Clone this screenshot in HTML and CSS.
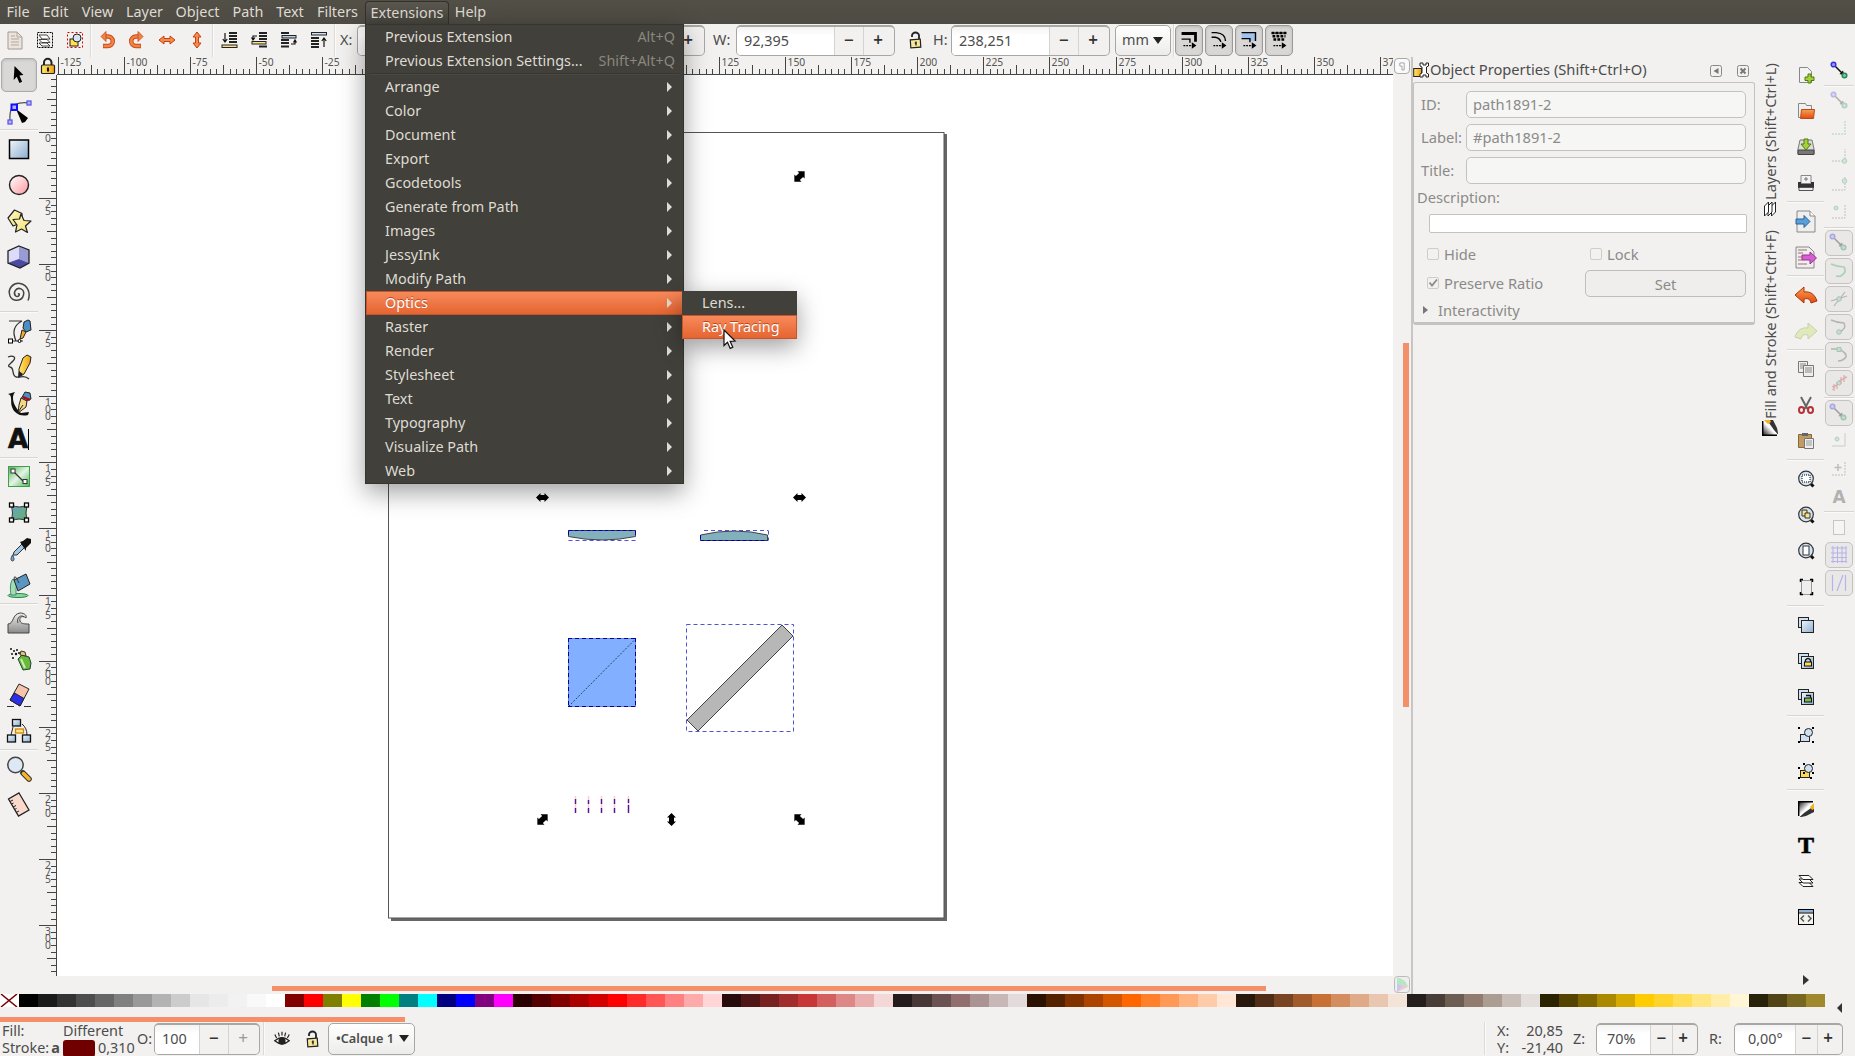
FILE: index.html
```html
<!DOCTYPE html>
<html lang="en">
<head>
<meta charset="utf-8">
<title>Inkscape</title>
<link rel="stylesheet" href="styles.css">
</head>
<body>
<svg class="defs" width="0" height="0">
  <defs>
    <linearGradient id="blue" x1="0" y1="0" x2="1" y2="1"><stop offset="0" stop-color="#f0f6fb"/><stop offset="1" stop-color="#8badcf"/></linearGradient>
    <linearGradient id="pink" x1="0" y1="0" x2="1" y2="1"><stop offset="0" stop-color="#fff"/><stop offset="1" stop-color="#ff98a0"/></linearGradient>
    <linearGradient id="yellow" x1="0" y1="0" x2="1" y2="1"><stop offset="0" stop-color="#fffde0"/><stop offset="1" stop-color="#f2dc55"/></linearGradient>
    <linearGradient id="green" x1="0" y1="0" x2="1" y2="1"><stop offset="0" stop-color="#4fb35c"/><stop offset=".5" stop-color="#e6f4e6"/><stop offset="1" stop-color="#4fb35c"/></linearGradient>
    <linearGradient id="mesh" x1="0" y1="0" x2="1" y2="1"><stop offset="0" stop-color="#6e9fc4"/><stop offset="1" stop-color="#5fb56a"/></linearGradient>
    <linearGradient id="orange" x1="0" y1="0" x2="0" y2="1"><stop offset="0" stop-color="#f8a24e"/><stop offset="1" stop-color="#e24a12"/></linearGradient>
    <linearGradient id="gold" x1="0" y1="0" x2="1" y2="0"><stop offset="0" stop-color="#ffe96b"/><stop offset="1" stop-color="#f0a010"/></linearGradient>
    <linearGradient id="ink" x1="0" y1="0" x2="1" y2="1"><stop offset="0" stop-color="#000"/><stop offset=".5" stop-color="#fff"/><stop offset="1" stop-color="#ddd"/></linearGradient>
    <linearGradient id="grey" x1="0" y1="0" x2="0" y2="1"><stop offset="0" stop-color="#eee"/><stop offset="1" stop-color="#8a8a8a"/></linearGradient>
    <symbol id="padlock" viewBox="0 0 14 18"><path d="M3 6V4.500a3.500 3 0 0 1 7 0V8" fill="none" stroke="#222" stroke-width="1.800"/><rect x="1.500" y="8.500" width="10" height="8" fill="#f7e69a" stroke="#222" stroke-width="1.200" transform="rotate(-4 7 12)"/><path d="M7 10.500v4M5.800 12h2" stroke="#222" stroke-width="1.300"/></symbol>
    <symbol id="snapnode" viewBox="0 0 24 24"><path d="M6.500 6.500L15 15" stroke="#111" stroke-width="1.500"/><path d="M16.500 16.500l-5-1.500 3.500-3.500z" fill="#111"/><circle cx="5.500" cy="5.500" r="2.300" fill="#99f" stroke="#33d" stroke-width="1.500"/><circle cx="16.500" cy="16.500" r="2.300" fill="#7c9" stroke="#285" stroke-width="1.500"/></symbol>
    <symbol id="twopage" viewBox="0 0 24 24"><rect x="4.500" y="4.500" width="10" height="10" fill="#cfe0f0" stroke="#222"/><rect x="7.500" y="7.500" width="12" height="12" fill="url(#blue)" stroke="#222"/></symbol>
    <symbol id="lens" viewBox="0 0 24 24"><path d="M16 16l3.500 3.500" stroke="#111" stroke-width="3"/><circle cx="12" cy="11.500" r="7.300" fill="#d4e4f2" stroke="#333" stroke-width="1.200"/></symbol>
    <symbol id="fillstroke" viewBox="0 0 16 16"><path d="M0 0h16v4L9 12l-3 2-6 2z" fill="url(#ink)"/><path d="M0 .7h15M.7 0v15" stroke="#000" stroke-width="1.400"/><path d="M16 5v6L8 15l-7 1.500L6 12z" fill="#333"/><path d="M12 6l4-4v6l-2 1z" fill="#f2b51c"/></symbol>
    <symbol id="layers" viewBox="0 0 16 16"><g fill="#fff" stroke="#222" stroke-width="1"><path d="M1 9.500h10l4 4H5z"/><path d="M1 6h10l4 4H5z"/><path d="M1 2.500h10l4 4H5z"/></g></symbol>
  </defs>
</svg>

<nav class="menubar">
  <span>File</span><span>Edit</span><span>View</span><span>Layer</span><span>Object</span><span>Path</span><span>Text</span><span>Filters</span>
  <span class="open">Extensions</span><span>Help</span>
</nav>

<div class="toolbar">
  <svg class="ti faded" viewBox="0 0 24 24"><path d="M5 4h9l5 5v12H5z" fill="#e9e0d8" stroke="#8a7f78"/><path d="M14 4v5h5M8 8h4M8 11h8M8 14h8M8 17h8" fill="none" stroke="#a08f85"/></svg>
  <svg class="ti" viewBox="0 0 24 24"><rect x="4.500" y="4.500" width="15" height="15" fill="none" stroke="#000" stroke-dasharray="2 1"/><g fill="#fff" stroke="#333" stroke-width=".9"><path d="M6 15h8l3 3H9z"/><path d="M6 11.500h8l3 3H9z"/><path d="M6 7h8l3 4H9z"/></g></svg>
  <svg class="ti" viewBox="0 0 24 24"><rect x="4.500" y="4.500" width="15" height="15" fill="none" stroke="#d00" stroke-dasharray="2 2"/><rect x="7" y="11" width="8" height="7" fill="#ffe14d" stroke="#222"/><circle cx="14" cy="10" r="4" fill="#d5e5f4" stroke="#222"/></svg>
  <i class="vsep"></i>
  <svg class="ti" viewBox="0 0 24 24"><path d="M9 8.500h4a4.500 4.500 0 0 1 0 9.500H8" fill="none" stroke="#c8481c" stroke-width="4.500"/><path d="M9 8.500h4a4.500 4.500 0 0 1 0 9.500H8.500" fill="none" stroke="#f08440" stroke-width="2.700"/><path d="M6 8.500l5-5v10z" fill="#f08440" stroke="#c8481c" stroke-width=".8"/></svg>
  <svg class="ti flip" viewBox="0 0 24 24"><path d="M9 8.500h4a4.500 4.500 0 0 1 0 9.500H8" fill="none" stroke="#c8481c" stroke-width="4.500"/><path d="M9 8.500h4a4.500 4.500 0 0 1 0 9.500H8.500" fill="none" stroke="#f08440" stroke-width="2.700"/><path d="M6 8.500l5-5v10z" fill="#f08440" stroke="#c8481c" stroke-width=".8"/></svg>
  <svg class="ti" viewBox="0 0 24 24"><path d="M4 12l5-4v2.500h6V8l5 4-5 4v-2.500H9V16z" fill="#f58b4a" stroke="#c04313"/></svg>
  <svg class="ti turn" viewBox="0 0 24 24"><path d="M4 12l5-4v2.500h6V8l5 4-5 4v-2.500H9V16z" fill="#f58b4a" stroke="#c04313"/></svg>
  <i class="vsep"></i>
  <svg class="ti" viewBox="0 0 24 24"><path d="M12 5h8M12 8h8M12 11h8M12 14h8" stroke="#222" stroke-width="2"/><rect x="5" y="17" width="15" height="2.500" fill="#fbe28a" stroke="#222"/><path d="M8 5v8M5.800 11L8 14l2.200-3" fill="none" stroke="#111" stroke-width="1.200"/></svg>
  <svg class="ti" viewBox="0 0 24 24"><path d="M12 5h8M12 8h8M12 11h8M12 18.500h8" stroke="#222" stroke-width="2"/><rect x="5" y="13.500" width="14" height="2.500" fill="#fbe28a" stroke="#222"/><path d="M10 8H6v3M4.500 9.500L6 12l2-2.500" fill="none" stroke="#111" stroke-width="1.200"/></svg>
  <svg class="ti" viewBox="0 0 24 24"><path d="M4 5h8M4 12h8M4 15h8M4 18.500h8" stroke="#222" stroke-width="2"/><rect x="5" y="7.500" width="14" height="2.500" fill="#b7d0ea" stroke="#222"/><path d="M14 16h4v-3M16.500 14.500L18 12l1.500 2.500" fill="none" stroke="#111" stroke-width="1.200"/></svg>
  <svg class="ti" viewBox="0 0 24 24"><path d="M4 10h8M4 13h8M4 16h8M4 19h8" stroke="#222" stroke-width="2"/><rect x="4.500" y="4.500" width="15" height="2.500" fill="#cfe0f2" stroke="#222"/><path d="M17 19v-8M14.800 13L17 10l2.200 3" fill="none" stroke="#111" stroke-width="1.200"/></svg>
  <i class="vsep"></i>
  <label class="lb x">X:</label>
  <div class="spin"><span>60,325</span><b>−</b><b>+</b></div>
  <label class="lb y">Y:</label>
  <div class="spin"><span>15,022</span><b>−</b><b>+</b></div>
  <label class="lb w">W:</label>
  <div class="spin"><span>92,395</span><b>−</b><b>+</b></div>
  <svg class="tlock"><use href="#padlock"/></svg>
  <label class="lb h">H:</label>
  <div class="spin"><span>238,251</span><b>−</b><b>+</b></div>
  <div class="combo unit">mm<i class="down"></i></div>
  <i class="vsep"></i>
  <div class="toggles">
    <svg viewBox="0 0 28 30"><path d="M6 8h15v9" fill="none" stroke="#000" stroke-width="3"/><path d="M6 14h9v4" fill="none" stroke="#000" stroke-width="1.500"/><path d="M8 21h10" stroke="#000" stroke-width="1.500" stroke-dasharray="2 1"/><path d="M17 17.500l5 3.500-5 3.500z"/></svg>
    <svg viewBox="0 0 28 30"><path d="M6 7h5q10 1 10 9" fill="none" stroke="#000" stroke-width="1.500"/><path d="M6 12h4q5 1 6 5" fill="none" stroke="#000" stroke-width="1.500"/><path d="M8 21h10" stroke="#000" stroke-width="1.500" stroke-dasharray="2 1"/><path d="M17 17.500l5 3.500-5 3.500z"/></svg>
    <svg viewBox="0 0 28 30"><path d="M6 7h15v9h-6v-3H6z" fill="#9fc2ee"/><path d="M6 7h15v9" fill="none" stroke="#000" stroke-width="1.500"/><path d="M6 13.500h9v4" fill="none" stroke="#000" stroke-width="1.500"/><path d="M8 21h10" stroke="#000" stroke-width="1.500" stroke-dasharray="2 1"/><path d="M17 17.500l5 3.500-5 3.500z"/></svg>
    <svg viewBox="0 0 28 30"><path d="M6 7.500h16M7 11h14M8 14.500h12" stroke="#000" stroke-width="2.600" stroke-dasharray="3 1.300"/><path d="M6 7.500h16" stroke="#000"/><path d="M8 21h10" stroke="#000" stroke-width="1.500" stroke-dasharray="2 1"/><path d="M17 17.500l5 3.500-5 3.500z"/></svg>
  </div>
</div>

<main class="workspace">
  <aside class="toolbox">
    <svg class="tool active" viewBox="0 0 36 36"><path d="M14 7l10 10-4.500.6 3 7-3 1.400-3-7-3.500 3.500z" transform="translate(-1 1)"/></svg>
    <svg class="tool" viewBox="0 0 36 36"><path d="M9 30Q8 14 14 11.500T28 10" fill="none" stroke="#555" stroke-width="1.300"/><path d="M15 16l12 9-3 4-3 1z"/><g fill="#b5b5ff" stroke="#5a5ae8" stroke-width="1.300"><rect x="7" y="27" width="4" height="4"/><rect x="26" y="8" width="4" height="4"/><rect x="10.500" y="11.500" width="5.500" height="5.500" stroke="#11f" stroke-width="2"/></g></svg>
    <i class="hsep"></i>
    <svg class="tool" viewBox="0 0 36 36"><rect x="8.500" y="9" width="19" height="18.500" fill="url(#blue)" stroke="#000" stroke-width="1.500"/></svg>
    <svg class="tool" viewBox="0 0 36 36"><circle cx="18" cy="18" r="9.500" fill="url(#pink)" stroke="#222" stroke-width="1.400"/></svg>
    <svg class="tool" viewBox="0 0 36 36"><g fill="url(#yellow)" stroke="#222" stroke-width="1.200" stroke-linejoin="round"><path d="M13.500 7l7.500 3.500v9l-9 3.500-5-8z"/><path d="M20 11l3 6.500 7 .5-5.500 5 2 6.500-6-3.500-6 3 1.500-7-4-5.500 6.500-.5z"/></g></svg>
    <svg class="tool" viewBox="0 0 36 36"><path d="M18 7l10 4v13l-9 5-12-5V12z" fill="#bdbde8"/><path d="M18 7v13l-11 4V12z" fill="#dcdcf8"/><path d="M18 20l10 4-9 5-12-5z" fill="#4a4aa0"/><path d="M18 7l10 4v13l-10-4z" fill="#9a9ad4"/><path d="M18 7l10 4v13l-9 5-12-5V12z" fill="none" stroke="#222" stroke-width="1.300"/></svg>
    <svg class="tool" viewBox="0 0 36 36"><path d="M17 19q2-1 1 1.500c-2 2.500-6-.5-4-4.500 3-5 10-2 8.500 4-1.500 6.500-11 7-13.500 1C6 13 13 7.500 19 8.500c8 1.500 11 10 8 17" fill="none" stroke="#444" stroke-width="1.500"/></svg>
    <i class="hsep"></i>
    <svg class="tool" viewBox="0 0 36 36"><path d="M8 8h13Q9 14 15 28M8 28h14" fill="none" stroke="#333" stroke-width="1.200"/><rect x="7.500" y="26" width="4" height="4" fill="#fff" stroke="#000"/><circle cx="18.500" cy="28" r="1.500" fill="#fff" stroke="#000"/><path d="M23 9l4-2 2 1 1 9-5 2-3-4z" fill="#4b8fc4" stroke="#222"/><path d="M21 17l4 2-3 6-3 1z" fill="#f4a82c" stroke="#222"/></svg>
    <svg class="tool" viewBox="0 0 36 36"><path d="M7 8c5-2 9 0 5 4s-6 5-3 6c5 1 1 8 6 10 5 1 8-3 13 2" fill="none" stroke="#333" stroke-width="1.300"/><path d="M22 9l4-3 4 2-1 6-6 11-5 3v-8z" fill="url(#gold)" stroke="#222"/><path d="M18 22l4 3-5 4z" fill="#222"/></svg>
    <svg class="tool" viewBox="0 0 36 36"><path d="M7 9l7-2c-5 6 0 16 6 21l8-1-1 3c-8 2-14-2-16-8-2-5 1-12-4-13z" fill="#111"/><path d="M24 7l5 1 1 6-8 3-2-3z" fill="#4b8fc4" stroke="#222"/><path d="M20 13l6 3-1 6-8 6 1-8z" fill="#f6d883" stroke="#222"/><path d="M17 27l5-7" stroke="#222"/><path d="M22 12l7 3" stroke="#b00" stroke-width="2"/></svg>
    <div class="tool texttool">A<i></i></div>
    <i class="hsep"></i>
    <svg class="tool" viewBox="0 0 36 36"><rect x="7.500" y="7.500" width="21" height="20" fill="url(#green)" stroke="#3fa04c"/><path d="M12 12l11 11" stroke="#333" stroke-width="1.300"/><rect x="10" y="10" width="4" height="4" fill="#fff" stroke="#333"/><rect x="22" y="20.500" width="4" height="4" fill="#fff" stroke="#333"/></svg>
    <svg class="tool" viewBox="0 0 36 36"><path d="M10.500 10q8 4 15.500 0-2 8 0 16-8-4-15.500 0 2-8 0-16z" fill="url(#mesh)" stroke="#333"/><g fill="#fff" stroke="#000" stroke-width="1.300"><rect x="8.500" y="8" width="4" height="4"/><rect x="23.500" y="8" width="4" height="4"/><rect x="8.500" y="23" width="4" height="4"/><rect x="23.500" y="23" width="4" height="4"/></g></svg>
    <svg class="tool" viewBox="0 0 36 36"><path d="M12 24l1-3 8-8 3 3-8 8z" fill="#9fc6e4" stroke="#333"/><path d="M19 11l3-1 4-3 4 1v4l-5 5v3z" fill="#111"/><path d="M11.500 24q-3 5.500 0 6 3-.5 0-6z" fill="#6ea8dc" stroke="#345"/></svg>
    <svg class="tool" viewBox="0 0 36 36"><ellipse cx="17" cy="28.500" rx="10" ry="2" fill="#8fd49a" stroke="#285"/><path d="M12 12c-3 3-3 10-2 16h5c0-6 0-8 1-11z" fill="#a4ddb0" stroke="#487"/><path d="M13 13l12-6 4 10-12 7z" fill="#5a96c0" stroke="#222"/><path d="M13 13q0-8 5 3" fill="none" stroke="#333"/></svg>
    <i class="hsep"></i>
    <svg class="tool" viewBox="0 0 36 36"><path d="M7 28V19c6 0 4-10 12-11 5 0 7 3 6 5-3-3-7-1-6 3 1 3 5 3 9 3v9z" fill="url(#grey)" stroke="#444"/><path d="M17 18c-2-5 3-9 6-6" fill="none" stroke="#444"/></svg>
    <svg class="tool" viewBox="0 0 36 36"><g fill="#111"><circle cx="10" cy="8" r="1"/><circle cx="13" cy="10" r="1"/><circle cx="16" cy="9" r="1"/><circle cx="11" cy="13" r="1"/><circle cx="15" cy="13" r="1.200"/><circle cx="18" cy="12" r="1"/><circle cx="12" cy="17" r="1"/></g><path d="M17 18l4-4 7 2 2 6-1 6-7 1z" fill="#69b83c" stroke="#243"/><path d="M20 10l4 1 1 4-6-1z" fill="#e9c86b" stroke="#333"/><path d="M20 18l4 9" stroke="#c7edb0" stroke-width="2"/></svg>
    <svg class="tool" viewBox="0 0 36 36"><path d="M6 29.500h7M23 29.500h7" stroke="#333"/><path d="M18 7l10 5-9 17-10-6z" fill="#f6c3ab" stroke="#222"/><path d="M13.500 16l9.500 5.500-4 7.500-10-6z" fill="#2b30e8" stroke="#222"/></svg>
    <svg class="tool" viewBox="0 0 36 36"><path d="M12 14l-2 8M21 11q5 4 5 11" fill="none" stroke="#222"/><g fill="url(#blue)" stroke="#111" stroke-width="1.300"><rect x="11.500" y="6.500" width="8" height="6.500"/><rect x="6.500" y="22" width="8" height="7"/><rect x="21.500" y="22" width="8" height="7"/></g><rect x="14.500" y="16" width="8" height="4" fill="#ffe28a" stroke="#c80" stroke-width="1.300"/></svg>
    <i class="hsep"></i>
    <svg class="tool" viewBox="0 0 36 36"><path d="M22 22l6 6" stroke="#333" stroke-width="5.500" stroke-linecap="round"/><path d="M22.500 22.500l5.500 5.500" stroke="#f8b52c" stroke-width="3.500" stroke-linecap="round"/><circle cx="14.500" cy="14" r="7.700" fill="#dce9f4" stroke="#444" stroke-width="1.500"/></svg>
    <svg class="tool" viewBox="0 0 36 36"><path d="M18 6l10 17L17.500 29 7.500 12z" fill="#fbd9cc" stroke="#222" stroke-width="1.300"/><path d="M9 14.500l3-1.500M10.500 17l2-1M12 20l3-1.500M13.500 22.500l2-1M15 25.500l3-1.500" stroke="#222"/></svg>
  </aside>

  <section class="view">
    <div class="corner"><svg viewBox="0 0 19 18"><path d="M6 9V5.500a3.500 3.500 0 0 1 7.500 0V9" fill="none" stroke="#222" stroke-width="2"/><rect x="3.500" y="8" width="13" height="8.500" rx="1" fill="url(#gold)" stroke="#222" stroke-width="1.200"/><path d="M10 10.500v4" stroke="#111" stroke-width="2"/></svg></div>
    <svg class="hruler" id="hruler"></svg>
    <div class="guidebtn"><svg viewBox="0 0 16 16"><path d="M5.500 4.500h5v8H8V8H5.500z" fill="#fff" stroke="#999"/></svg></div>
    <svg class="vruler" id="vruler"></svg>
    <svg class="canvas" viewBox="57 75 1336 901">
      <rect x="57" y="75" width="1336" height="901" fill="#fff"/>
      <path d="M391 919.500H945.500V134" fill="none" stroke="#666" stroke-width="3"/>
      <rect x="388.500" y="132.500" width="555.500" height="785.500" fill="#fff" stroke="#555"/>
      <g stroke="#444">
        <path d="M568.500 530.500h67v6q-33 7-67 0z" fill="#82b1bd"/>
        <path d="M700.500 540.500v-5.500q34-8 67 0v5.500z" fill="#82b1bd"/>
        <rect x="568.500" y="638.500" width="67" height="68" fill="#82afff" stroke="#6a86c0"/>
        <path d="M568.500 706.500l67-67.500" stroke-dasharray="2 1.500" stroke="#345"/>
        <path d="M687 720l11 11 95-95-11-11z" fill="#b7b7b7"/>
      </g>
      <g fill="none" stroke="#5050d8" stroke-dasharray="4 3">
        <path d="M568.500 540.500h67M704 530.500h64M768.500 530.500v10"/>
        <rect x="686.500" y="624.500" width="107" height="107"/>
      </g>
      <path d="M568.500 531v5M635.500 531v5M568.500 530.500h67M700.500 535v5M700.500 540.500h67" stroke="#0000b0" stroke-dasharray="4 2"/>
      <path d="M568.500 638v70M635.500 638v70M568 638.500h68M568 706.500h68" fill="none" stroke="#0000b0" stroke-dasharray="4 3"/>
      <path d="M575.500 796v17M588.500 796v17M601.500 796v17M614.500 796v17M628.500 796v17" stroke="#fcc" stroke-width="1.500"/>
      <path d="M575.500 799v5m0 4v5M588.500 800v4m0 4v5M601.500 799v5m0 4v5M614.500 799v5m0 4v5M628.500 799v4m0 2v8" stroke="#51189c" stroke-width="1.400"/>
      <defs><path id="arr" d="M-6.500 0L-2 -4.500V-2.500H2V-4.500L6.500 0 2 4.500V2.500H-2V4.500z"/></defs>
      <use href="#arr" x="542.500" y="497.500"/><use href="#arr" x="799.500" y="497.500"/>
      <use href="#arr" transform="translate(799.500 176.500) rotate(-45) scale(1.120)"/>
      <use href="#arr" transform="translate(542.500 819.500) rotate(-45) scale(1.120)"/>
      <use href="#arr" transform="translate(799.500 819.500) rotate(45) scale(1.120)"/>
      <use href="#arr" transform="translate(671.500 819.500) rotate(90)"/>
    </svg>
    <div class="vscroll"><i></i></div>
    <div class="hscroll"><i></i></div>
    <div class="cms"><svg viewBox="0 0 16 17"><rect x=".5" y=".5" width="15" height="16" rx="3" fill="#eee" stroke="#bbb"/><path d="M3 1.500q8 1 11 9L3 16z" fill="#b8e6c4"/><path d="M14 10.500L3 16l4-7z" fill="#f3c3d6"/><path d="M3 8l5 2-5 6z" fill="#c5c8f2"/></svg></div>
  </section>

  <aside class="dock">
    <header>
      <svg viewBox="0 0 16 16"><rect x=".7" y="6.500" width="8" height="8" fill="url(#gold)" stroke="#222"/><path d="M7 1v3l2 1v6l-2 1v3h3v-2h3v2h2.500v-3l-2-1V5l2-1V1H13v2h-3V1z" fill="#fff" stroke="#222"/></svg>
      <h2>Object Properties (Shift+Ctrl+O)</h2>
      <svg class="hb" viewBox="0 0 12 12"><rect x=".5" y=".5" width="11" height="11" rx="2" fill="none" stroke="#888"/><path d="M8.500 3v6L3.500 6z" fill="#777"/></svg>
      <svg class="hb" viewBox="0 0 12 12"><rect x=".5" y=".5" width="11" height="11" rx="2" fill="none" stroke="#888"/><path d="M3.500 3.500l5 5M8.500 3.500l-5 5" stroke="#777" stroke-width="2"/></svg>
    </header>
    <div class="panel">
      <div class="field"><label>ID:</label><div class="entry">path1891-2</div></div>
      <div class="field"><label>Label:</label><div class="entry">#path1891-2</div></div>
      <div class="field"><label>Title:</label><div class="entry"></div></div>
      <div class="desc">Description:</div>
      <div class="area"></div>
      <div class="checks"><span><i></i>Hide</span><span><i></i>Lock</span></div>
      <div class="ratio"><span><i><svg viewBox="0 0 12 12"><path d="M2.500 5.500l2.500 3 5-6" fill="none" stroke="#8c8c8c" stroke-width="1.800"/></svg></i>Preserve Ratio</span><button>Set</button></div>
      <div class="expander"><i></i>Interactivity</div>
    </div>
  </aside>

  <aside class="tabs">
    <div class="tab t1"><svg viewBox="0 0 16 16"><use href="#layers"/></svg><span>Layers (Shift+Ctrl+L)</span></div>
    <div class="tab t2"><svg viewBox="0 0 16 16"><use href="#fillstroke"/></svg><span>Fill and Stroke (Shift+Ctrl+F)</span></div>
  </aside>

  <aside class="commands">
    <svg viewBox="0 0 24 24"><path d="M5.500 4.500h8l4 4v11h-12z" fill="#f3f3f3" stroke="#888"/><path d="M14 11h3v3h3v3.500h-3V20h-3v-2.500h-3V14h3z" fill="#a6cf3d" stroke="#4d7a0d"/></svg>
    <svg viewBox="0 0 24 24"><path d="M4.500 4.500h7l1 2h5v12h-13z" fill="#f0f0f0" stroke="#888"/><path d="M7.500 10.500h13l-1 9h-13z" fill="url(#orange)" stroke="#b84a20"/></svg>
    <svg viewBox="0 0 24 24"><path d="M6 5h12l2 9v5H4v-5z" fill="#ddd" stroke="#777"/><path d="M4 15h16v4.500H4z" fill="#777" stroke="#444"/><path d="M10 4h4v5h3l-5 6-5-6h3z" fill="#a6cf3d" stroke="#4d7a0d"/></svg>
    <svg viewBox="0 0 24 24"><path d="M7 4.500h10v8H7z" fill="#f3f3f3" stroke="#888"/><path d="M4 11h3v2h10v-2h3v6H4z" fill="#333"/><path d="M5 16.500h14v3H5z" fill="#eee" stroke="#555"/><path d="M12 6v4M10 8h4" stroke="#777"/></svg>
    <i class="hsep"></i>
    <svg viewBox="0 0 24 24"><path d="M3 2h13l5 5v16H3z" fill="#eee" stroke="#888"/><path d="M16 2v5h5" fill="#fff" stroke="#888"/><path d="M2 10h8V6.500l6 6-6 6V15H2z" fill="#5b9fd8" stroke="#27639c"/></svg>
    <svg viewBox="0 0 24 24"><path d="M2 2h13l5 5v16H2z" fill="#eee" stroke="#888"/><path d="M4 5h9M4 8h5M4 12h4M4 15h4M4 19h9" stroke="#b99" stroke-width="1.500"/><path d="M8 10h8V7l6.500 6-6.500 6v-4H8z" fill="#d65fd0" stroke="#963191"/></svg>
    <i class="hsep"></i>
    <svg viewBox="0 0 24 24"><path d="M1 12l9-8v5c7-1 11 3 13 9l-6 2c-1-4-3-5-7-4v4z" fill="url(#orange)" stroke="#a8370b"/></svg>
    <svg class="faint" viewBox="0 0 24 24"><path d="M23 12l-9-8v5C7 8 3 12 1 18l6 2c1-4 3-5 7-4v4z" fill="#cfe38a" stroke="#9db35a"/></svg>
    <i class="hsep"></i>
    <svg viewBox="0 0 24 24"><g fill="#eee" stroke="#777"><path d="M4.500 4.500h9v11h-9z"/><path d="M9.500 8.500h10v11h-10z"/></g><path d="M6 7h6M6 9h3M6 11h3M11 11h7M11 13h7M11 15h7" stroke="#888"/></svg>
    <svg viewBox="0 0 24 24"><path d="M7 4l6.500 12M17 4l-6.500 12" stroke="#666" stroke-width="2"/><ellipse cx="7.500" cy="17" rx="2.500" ry="3" fill="none" stroke="#b5323a" stroke-width="2"/><ellipse cx="16.500" cy="17" rx="2.500" ry="3" fill="none" stroke="#b5323a" stroke-width="2"/></svg>
    <svg viewBox="0 0 24 24"><path d="M4.500 5.500h13v13h-13z" fill="#c09b62" stroke="#86683a"/><path d="M8 4h6v3H8z" fill="#666"/><path d="M10.500 9.500h9v10h-9z" fill="#eee" stroke="#777"/><path d="M12 12h6M12 14h6M12 16h6" stroke="#999"/></svg>
    <i class="hsep"></i>
    <svg viewBox="0 0 24 24"><use href="#lens"/><rect x="8" y="8" width="8" height="7" fill="#fff" stroke="#000" stroke-dasharray="1 1"/></svg>
    <svg viewBox="0 0 24 24"><use href="#lens"/><path d="M8 7h5v6H8z" fill="#ffe28a" stroke="#333"/><path d="M11 10h5v5h-5z" fill="#ffe28a" stroke="#333"/></svg>
    <svg viewBox="0 0 24 24"><use href="#lens"/><rect x="9" y="7" width="6" height="9" fill="#fff" stroke="#333"/></svg>
    <svg viewBox="0 0 24 24"><path d="M7.500 5.500h10v14h-10z" fill="#eee" stroke="#999"/><path d="M6 4.500h3M6.500 4v3M16 4.500h3M18.500 4v3M6 19.500h3M6.500 17v3M16 19.500h3M18.500 17v3" stroke="#000" stroke-width="1.500"/></svg>
    <i class="hsep"></i>
    <svg viewBox="0 0 24 24"><use href="#twopage"/></svg>
    <svg viewBox="0 0 24 24"><use href="#twopage"/><path d="M11.500 13v-2q2.500-3 5 0v2" fill="none" stroke="#111" stroke-width="1.300"/><rect x="10.500" y="13" width="7" height="4" fill="#ffdb4d" stroke="#111"/></svg>
    <svg viewBox="0 0 24 24"><use href="#twopage"/><path d="M12 10.500h4.500V13" fill="none" stroke="#111" stroke-width="1.300"/><rect x="10.500" y="13" width="7" height="4" fill="#7ab84a" stroke="#111"/></svg>
    <i class="hsep"></i>
    <svg viewBox="0 0 24 24"><rect x="6.500" y="11.500" width="9" height="7" fill="#cfe0f0" stroke="#222"/><circle cx="14.500" cy="9.500" r="4" fill="#cfe0f0" stroke="#222"/><path d="M4 4h2v2H4zM18 4h2v2h-2zM4 18h2v2H4zM18 18h2v2h-2z"/></svg>
    <svg viewBox="0 0 24 24"><rect x="6.500" y="11.500" width="9" height="7" fill="#ffd84d" stroke="#222"/><circle cx="14.500" cy="9.500" r="4" fill="#cfe0f0" stroke="#222"/><path d="M9 4h2v2H9zM18 4h2v2h-2zM4 8h2v2H4zM4 18h2v2H4zM16 18h2v2h-2zM18 13h2v2h-2zM9 13h2v2H9z"/></svg>
    <i class="hsep"></i>
    <svg viewBox="0 0 24 24"><use href="#fillstroke" x="4" y="4" width="16" height="16"/></svg>
    <div class="tee">T</div>
    <svg viewBox="0 0 24 24"><use href="#layers" x="4" y="4" width="16" height="16"/></svg>
    <svg viewBox="0 0 24 24"><rect x="4.500" y="4.500" width="15" height="15" fill="#f4f4ee" stroke="#000"/><path d="M5 5h14v2.500H5z" fill="#8fb2d8"/><path d="M5 8h14" stroke="#000"/><path d="M10 10.500L7 13.500l3 3M14 10.500l3 3-3 3" fill="none" stroke="#555" stroke-width="1.500"/></svg>
    <i class="more"></i>
  </aside>

  <aside class="snaps">
    <svg viewBox="0 0 24 24"><use href="#snapnode"/></svg>
    <i class="hsep"></i>
    <svg class="off" viewBox="0 0 24 24"><use href="#snapnode"/></svg>
    <svg class="off" viewBox="0 0 24 24"><path d="M4 17h13V4" fill="none" stroke="#4b6" stroke-width="1.500" stroke-dasharray="2 1"/></svg>
    <svg class="off" viewBox="0 0 24 24"><path d="M4 16h13V4" fill="none" stroke="#555" stroke-dasharray="2 1"/><circle cx="16.500" cy="16" r="2.300" fill="#8c9" stroke="#285"/></svg>
    <svg class="off" viewBox="0 0 24 24"><path d="M4 17h13V4" fill="none" stroke="#555" stroke-dasharray="2 1"/><circle cx="16.500" cy="8" r="2.300" fill="#8c9" stroke="#285"/></svg>
    <svg class="off" viewBox="0 0 24 24"><path d="M4 17h13V4" fill="none" stroke="#555" stroke-dasharray="2 1"/><circle cx="8" cy="7" r="2" fill="#8c9" stroke="#285"/></svg>
    <i class="hsep"></i>
    <div class="btn"><svg viewBox="0 0 24 24"><use href="#snapnode"/></svg></div>
    <div class="btn"><svg viewBox="0 0 24 24"><path d="M4 5q7 3 13 3 3 5-2 8-1 2-6 1" fill="none" stroke="#3a5" stroke-width="1.700"/></svg></div>
    <div class="btn"><svg viewBox="0 0 24 24"><path d="M4 14l16-5M7 19L18 5" stroke="#555" stroke-width="1.200"/><circle cx="12" cy="12" r="2.300" fill="#8c9" stroke="#285"/></svg></div>
    <div class="btn"><svg viewBox="0 0 24 24"><path d="M4 5q7 3 13 3 3 6-5 9" fill="none" stroke="#555" stroke-width="1.500"/><circle cx="12" cy="17" r="2.300" fill="#8c9" stroke="#285"/></svg></div>
    <div class="btn"><svg viewBox="0 0 24 24"><path d="M4 6h8q8 4 7 8-3 4-8 4" fill="none" stroke="#555" stroke-width="1.500"/><path d="M10 4.500h4v4h-4z" fill="#8c9" stroke="#285"/></svg></div>
    <div class="btn"><svg viewBox="0 0 24 24"><path d="M5 19L19 5" stroke="#888"/><path d="M7 13v7M10 11v7M5 16l7-3M14 6v7M17 4v7M12 10l8-4" stroke="#c33" stroke-width="1.200"/><circle cx="12" cy="12" r="2" fill="#8c9" stroke="#285"/></svg></div>
    <i class="hsep"></i>
    <div class="btn"><svg viewBox="0 0 24 24"><use href="#snapnode"/></svg></div>
    <svg class="off" viewBox="0 0 24 24"><path d="M4 17h13V4" fill="none" stroke="#777"/><circle cx="9" cy="10" r="2" fill="#8c9" stroke="#285"/></svg>
    <svg class="off" viewBox="0 0 24 24"><path d="M4 18h13V5" fill="none" stroke="#555" stroke-dasharray="2 1"/><path d="M10 7v7M6.500 10.500h7" stroke="#444" stroke-width="1.500"/></svg>
    <div class="off snapa">A</div>
    <i class="hsep"></i>
    <svg class="off" viewBox="0 0 24 24"><rect x="5.500" y="5.500" width="11" height="14" fill="#fff" stroke="#666"/></svg>
    <div class="btn"><svg viewBox="0 0 24 24"><path d="M6 3v17M10.500 3v17M15 3v17M19 3v17M4 5h16M4 10h16M4 14.500h16M4 18.500h16" stroke="#55e"/></svg></div>
    <div class="btn"><svg viewBox="0 0 24 24"><path d="M5.500 4v16M18.500 4v16M10 20l6-16" stroke="#55e" stroke-width="1.200"/></svg></div>
  </aside>
</main>

<div class="palette"><div class="swatches" id="swatches"></div><i class="left"></i></div>

<footer class="status">
  <div class="progress"></div>
  <div class="row">
    <div class="style">
      <span>Fill:</span><span class="v">Different</span>
      <span class="st">Stroke:<b>a</b></span><span class="v"><i></i>0,310</span>
    </div>
    <label class="o">O:</label>
    <div class="spin op"><span>100</span><b>−</b><b class="dim">+</b></div>
    <i class="vsep"></i>
    <svg class="eye" viewBox="0 0 20 18"><path d="M2 11q8-7 16 0-8 7-16 0z" fill="#fff" stroke="#222" stroke-width="1.500"/><circle cx="10" cy="11" r="4" fill="#222"/><path d="M4 8L2 4M7 6L6 2M10 5V1M13 6l1-4M16 8l2-4" stroke="#222" stroke-width="1.300"/></svg>
    <svg class="slock"><use href="#padlock"/></svg>
    <div class="combo layer">•Calque 1<i class="down"></i></div>
    <div class="grow"></div>
    <i class="vsep"></i>
    <div class="coords"><span>X:</span><span>20,85</span><span>Y:</span><span>-21,40</span></div>
    <label class="z">Z:</label>
    <div class="spin zoom"><span>70%</span><b>−</b><b>+</b></div>
    <label class="r">R:</label>
    <div class="spin rot"><span>0,00°</span><b>−</b><b>+</b></div>
  </div>
</footer>

<div class="popup menu">
  <div class="it">Previous Extension<kbd>Alt+Q</kbd></div>
  <div class="it">Previous Extension Settings...<kbd>Shift+Alt+Q</kbd></div>
  <hr>
  <div class="it sub">Arrange</div>
  <div class="it sub">Color</div>
  <div class="it sub">Document</div>
  <div class="it sub">Export</div>
  <div class="it sub">Gcodetools</div>
  <div class="it sub">Generate from Path</div>
  <div class="it sub">Images</div>
  <div class="it sub">JessyInk</div>
  <div class="it sub">Modify Path</div>
  <div class="it sub hot">Optics</div>
  <div class="it sub">Raster</div>
  <div class="it sub">Render</div>
  <div class="it sub">Stylesheet</div>
  <div class="it sub">Text</div>
  <div class="it sub">Typography</div>
  <div class="it sub">Visualize Path</div>
  <div class="it sub">Web</div>
</div>
<div class="popup submenu">
  <div class="it">Lens...</div>
  <div class="it hot">Ray Tracing</div>
</div>
<svg class="pointer" viewBox="0 0 14 21"><path d="M1 1v15.500l3.500-3.300 2.700 6.200 2.600-1.200-2.700-5.900 5-.3z" fill="#fff" stroke="#111" stroke-width="1.200"/></svg>
<script src="app.js"></script>
</body>
</html>
```
FILE: styles.css
```css
* { box-sizing: border-box; }
body {
  margin: 0; width: 1855px; height: 1056px; overflow: hidden;
  display: flex; flex-direction: column; position: relative;
  background: #f2f1ef; color: #4c4c4c;
  font: 14.4px/18px "Noto Sans", "Open Sans", sans-serif;
}
svg { display: block; flex: none; }
.defs { position: absolute; }
.menubar {
  flex: none; height: 24px; display: grid; background: linear-gradient(#524f47, #4e4b44);
  grid-template-columns: 36px 39px 45px 49px 57px 44px 40px 55px 84px 43px;
  color: #dfdbd2; line-height: 24px; text-align: center; white-space: nowrap;
}
.menubar .open { margin-top: 1px; line-height: 22px; background: linear-gradient(#5b5850, #45433c); border: 1px solid #33312c; border-bottom: 0; border-radius: 4px 4px 0 0; }

.toolbar { flex: none; height: 33px; display: flex; align-items: flex-start; padding-top: 1px; }
.ti { width: 24px; height: 24px; margin: 3px 3px 0; }
.ti.flip { transform: scaleX(-1); }
.ti.turn { transform: rotate(90deg); }
.faded { opacity: .75; }
.vsep { flex: none; width: 2px; height: 33px; margin-top: -1px; border-left: 1px solid #dcdad7; background: #fbfbfa; }
.lb { flex: none; line-height: 30px; padding-left: 4px; }
.lb.x { width: 21px; } .lb.y { width: 30px; padding-left: 12px; }
.lb.w { width: 31px; padding-left: 8px; } .lb.h { width: 18px; padding-left: 0; }
.spin {
  flex: none; width: 159px; height: 31px; display: flex; overflow: hidden;
  border: 1px solid #a9a7a3; border-top-width: 2px; border-radius: 5px; background: #f2f1ef; line-height: 27px;
}
.spin span { flex: 1; padding-left: 7px; background: linear-gradient(#f3f3f3, #fff 30%); }
.spin b { flex: none; width: 29px; border-left: 1px solid #d5d3d0; text-align: center; font-weight: 600; font-size: 17px; line-height: 26px; color: #333; }
.spin b:last-child { width: 31px; padding-right: 2px; }
.spin b.dim { color: #999; font-weight: 400; }
.tlock { width: 14px; height: 18px; margin: 6px 10px 0 14px; }
.combo { flex: none; display: flex; align-items: center; height: 31px; border: 1px solid #a9a7a3; border-radius: 5px; background: linear-gradient(#fff, #ececea); padding-bottom: 1px; }
.combo.unit { width: 56px; margin: 0 2px 0 5px; padding-left: 6px; }
.down { border: 5px solid transparent; border-top: 7px solid #222; border-bottom: 0; margin-left: 4px; }
.toggles { display: flex; gap: 2px; }
.toggles svg { width: 28px; height: 31px; padding-bottom: 1px; background: #d9d7d5; border: 1px solid #9b9995; border-radius: 5px; box-shadow: inset 0 1px 3px #bbb; }

.workspace { flex: none; height: 937px; display: flex; }
.toolbox { flex: none; width: 38px; }
.tool { width: 36px; height: 36px; margin-left: 1px; }
.tool.active { height: 34px; margin: 1px 0 1px 1px; border: 1px solid #aaa; border-radius: 5px; background: #d9d8d6; box-shadow: inset 0 1px 3px #bbb; }
.texttool { font: 700 26px/35px "DejaVu Sans", sans-serif; color: #111; padding-left: 7px; display: flex; align-items: center; -webkit-text-stroke: .7px #111; }
.texttool i { width: 1px; height: 21px; background: #000; }
.hsep { display: block; flex: none; width: 38px; height: 2px; border-top: 1px solid #d8d6d3; background: #fafaf9; }

.view { flex: none; width: 1373px; display: grid; grid-template: 18px 901px 18px / 19px 1336px 18px; }
.corner svg { width: 19px; height: 18px; }
.hruler { width: 1336px; height: 18px; }
.vruler { width: 19px; height: 901px; }
.hruler text, .vruler text { font: 10.3px "Noto Sans", sans-serif; fill: #555; }
.hruler path, .vruler path { stroke: #444; shape-rendering: crispEdges; }
.canvas { width: 1336px; height: 901px; }
.guidebtn svg { width: 16px; height: 16px; margin: 1px; border: 1px solid #aaa; border-radius: 4px; background: #fafafa; }
.vscroll i { display: block; width: 6px; height: 364px; margin: 268px 0 0 10px; background: #f3906a; }
.hscroll { grid-column: 1 / 3; }
.hscroll i { display: block; width: 994px; height: 5px; margin: 10px 0 0 234px; background: #f3906a; }
.cms svg { width: 16px; height: 17px; margin-left: 1px; }

.dock { flex: none; width: 346px; border-left: 2px solid #c8c6c3; color: #8b8a88; font-size: 14.7px; }
.dock header { height: 25px; display: flex; align-items: center; color: #4c4c4c; }
.dock header > svg:first-child { width: 16px; height: 16px; }
.dock h2 { flex: none; width: 280px; margin: 0 0 0 1px; font-size: 14.7px; font-weight: 400; line-height: 25px; }
.hb { width: 12px; height: 12px; margin: 2px 15px 0 0; }
.panel { width: 342px; height: 243px; border: 1px solid #c4c2bf; border-bottom-width: 3px; border-radius: 3px; padding-top: 8px; }
.field { display: flex; align-items: center; height: 27px; margin: 0 8px 6px 7px; }
.field label { width: 45px; padding-bottom: 1px; }
.entry { flex: 1; height: 27px; padding-left: 6px; line-height: 24px; border: 1px solid #c4c2bf; border-radius: 5px; background: #f6f6f5; }
.desc { margin: -2px 0 0 3px; line-height: 19px; }
.area { height: 19px; margin: 7px 7px 0 15px; background: #fff; border: 1px solid #c4c2bf; border-radius: 2px; }
.checks { display: flex; margin: 12px 0 0 13px; }
.checks span, .ratio span { display: flex; align-items: center; width: 163px; }
.checks i, .ratio i { width: 12px; height: 12px; margin-right: 5px; border: 1px solid #cfcdca; border-radius: 2px; }
.ratio { display: flex; align-items: center; margin: 7px 0 0 13px; height: 27px; }
.ratio span { width: 158px; padding-bottom: 1px; }
.ratio i svg { width: 12px; height: 12px; margin: -1px; }
.ratio button { width: 161px; height: 27px; font: inherit; color: inherit; border: 1px solid #c0bebb; border-radius: 5px; background: #efeeed; padding: 0; }
.expander { display: flex; align-items: center; margin: 4px 0 0 9px; }
.expander i { border: 4.500px solid transparent; border-left: 5px solid #777; border-right: 0; margin-right: 10px; }

.tabs { flex: none; width: 30px; }
.tab { writing-mode: vertical-rl; transform: rotate(180deg); display: flex; align-items: center; width: 26px; gap: 1px; font-size: 14.6px; white-space: nowrap; }
.tab svg { width: 16px; height: 16px; }
.tab.t1 { height: 160px; }
.tab.t2 { height: 207px; margin-top: 12px; }
.tab svg use { transform: rotate(90deg); transform-origin: 8px 8px; }

.commands { flex: none; width: 37px; }
.commands > svg { width: 24px; height: 36px; padding: 6px 0; margin-left: 7px; }
.commands .faint { opacity: .5; }
.commands .hsep { width: 37px; }
.tee { height: 36px; width: 38px; text-align: center; font: 700 24px/36px "Liberation Serif", serif; color: #000; -webkit-text-stroke: .6px #000; }
.more { display: block; width: 0; margin: 40px 0 0 16px; border: 5px solid transparent; border-left: 6px solid #333; border-right: 0; }

.snaps { flex: none; width: 30px; display: flex; flex-direction: column; }
.snaps > svg { width: 24px; height: 28px; padding: 2px 0; margin-left: 4px; }
.snaps .btn { flex: none; width: 28px; height: 26px; margin: 1px; padding: 0 1px; border: 1px solid #c5c3c0; border-radius: 5px; background: #e9e8e6; }
.snaps .btn svg { width: 24px; height: 24px; opacity: .35; }
.snaps .off { opacity: .3; }
.snapa { flex: none; height: 28px; text-align: center; font: 700 17px/28px "DejaVu Sans", sans-serif; color: #222; }
.snaps .hsep { width: 30px; }

.palette { flex: none; height: 13px; display: flex; }
.swatches { width: 1825px; display: grid; grid-template-columns: repeat(96, 1fr); }
.palette .left { margin: 9px 0 -5px 12px; width: 0; height: 10px; border: 5px solid transparent; border-right: 5px solid #333; border-left: 0; }

.status { flex: none; height: 49px; }
.progress { width: 405px; height: 5px; margin-top: 10px; background: #f3906a; }
.row { display: flex; height: 34px; margin-top: 1px; line-height: 31px; }
.style { width: 134px; padding-left: 2px; display: grid; grid-template: 17px 17px / 61px 1fr; line-height: 16px; white-space: nowrap; }
.style .v { display: flex; justify-content: flex-start; }
.style i { width: 32px; height: 17px; margin-right: 3px; background: #700000; border-radius: 3px; }
.st b { margin-left: 2px; }
.o { width: 20px; padding-left: 3px; }
.spin.op { width: 106px; height: 32px; margin-right: 3px; }
.eye { width: 18px; height: 18px; margin: 7px 0 0 8px; }
.slock { width: 14px; height: 18px; margin: 7px 8px 0 15px; }
.layer { width: 87px; height: 32px; padding-left: 7px; font-weight: 600; font-size: 12.7px; }
.layer .down { margin-left: 5px; }
.grow { flex: 1; }
.coords { width: 77px; padding-left: 11px; display: grid; grid-template: 17px 17px / 20px 1fr; line-height: 16px; }
.coords span:nth-child(even) { text-align: right; }
.z { width: 33px; padding-left: 10px; }
.r { width: 36px; padding-left: 11px; }
.spin.zoom { width: 102px; height: 32px; }
.spin.rot { width: 109px; height: 32px; margin-right: 12px; }
.row .spin { line-height: 28px; }
.zoom span { padding-left: 10px; } .rot span { padding-left: 13px; }
.zoom b, .rot b { width: 22px; }
.zoom b:last-child, .rot b:last-child { width: 25px; padding-right: 4px; }

.popup { position: absolute; background: #41403a; color: #dfdbd2; border: 1px solid #35342f; box-shadow: 0 8px 24px rgba(0,0,0,.38); }
.menu { left: 365px; top: 24px; width: 319px; height: 460px; }
.submenu { left: 682px; top: 291px; width: 115px; height: 48px; border: 0; }
.it { height: 24px; padding-left: 19px; line-height: 24px; display: flex; justify-content: space-between; white-space: nowrap; }
.menu .it { line-height: 23px; }
.it kbd { font: inherit; color: #8a877f; padding-right: 8px; }
.sub::after { content: ""; box-sizing: border-box; width: 5px; height: 10px; background: #dfdbd2; clip-path: polygon(0 0, 100% 50%, 0 100%); margin: 7px 11px 0 0; }
.menu hr { margin: 0 4px; border: 0; height: 2px; background: #38372f; border-bottom: 1px solid #4a4943; }
.submenu .it { padding-left: 20px; }
.it.hot { color: #fff; background: linear-gradient(#f98b5c, #e4632f); box-shadow: inset 0 0 0 1px #c9532a; text-shadow: 0 -1px #b24a20; }
.pointer { position: absolute; left: 723px; top: 329px; width: 14px; height: 21px; }
```
FILE: app.js
```js
const SCALE = 2.6446; // pixels per millimetre at the current zoom

function ruler(id, originPx, length, vertical) {
  let ticks = "", labels = "";
  const first = Math.ceil(-originPx / SCALE / 2.5);
  for (let i = first; originPx + i * 2.5 * SCALE < length; i++) {
    const p = Math.floor(originPx + i * 2.5 * SCALE) + 0.5;
    const major = i % 10 === 0, mid = i % 5 === 0;
    if (vertical) {
      ticks += `M${major ? 1 : mid ? 9 : 13} ${p}H19`;
      if (major) [...String(Math.abs(i * 2.5))].forEach((c, k) => {
        labels += `<text x="7" y="${p + 9 + k * 7.3}">${c}</text>`;
      });
    } else {
      ticks += `M${p} ${major ? 0 : mid ? 8 : 12}V18`;
      if (major) labels += `<text x="${p + 2}" y="9">${i * 2.5}</text>`;
    }
  }
  ticks += vertical ? `M18.5 0V${length}` : `M0 17.5H${length}`;
  document.getElementById(id).innerHTML = `<path d="${ticks}"/>${labels}`;
}
ruler("hruler", 331.8, 1336, false);
ruler("vruler", 57.3, 901, true);

const colors = ("000000 1a1a1a 333333 4d4d4d 666666 808080 999999 b3b3b3 cccccc e6e6e6 ececec f2f2f2 f9f9f9 ffffff " +
  "800000 ff0000 808000 ffff00 008000 00ff00 008080 00ffff 000080 0000ff 800080 ff00ff " +
  "2b0000 550000 800000 aa0000 d40000 ff0000 ff2a2a ff5555 ff8080 ffaaaa ffd5d5 " +
  "280b0b 501616 782121 a02c2c c83737 d35f5f de8787 e9afaf f4d7d7 " +
  "241c1c 483737 6c5353 916f6f ac9393 c8b7b7 e3dbdb " +
  "2b1100 552200 803300 aa4400 d45500 ff6600 ff7f2a ff9955 ffb380 ffccaa ffe6d5 " +
  "28170b 502d16 784421 a05a2c c87137 d38d5f deaa87 e9c6af f4e3d7 " +
  "241f1c 483e37 6c5d53 917c6f ac9d93 c8beb7 e3dedb " +
  "2b2200 554400 806600 aa8800 d4aa00 ffcc00 ffd42a ffdd55 ffe680 ffeeaa fff6d5 " +
  "28220b 504416 786721 a0892c").split(" ");
document.getElementById("swatches").innerHTML =
  `<svg width="19" height="13"><rect width="19" height="13" fill="#fff"/><path d="M1 0l16 13M17 0L1 13" stroke="#700" stroke-width="1.5"/></svg>` +
  colors.map(c => `<i style="background:#${c}"></i>`).join("");
```
